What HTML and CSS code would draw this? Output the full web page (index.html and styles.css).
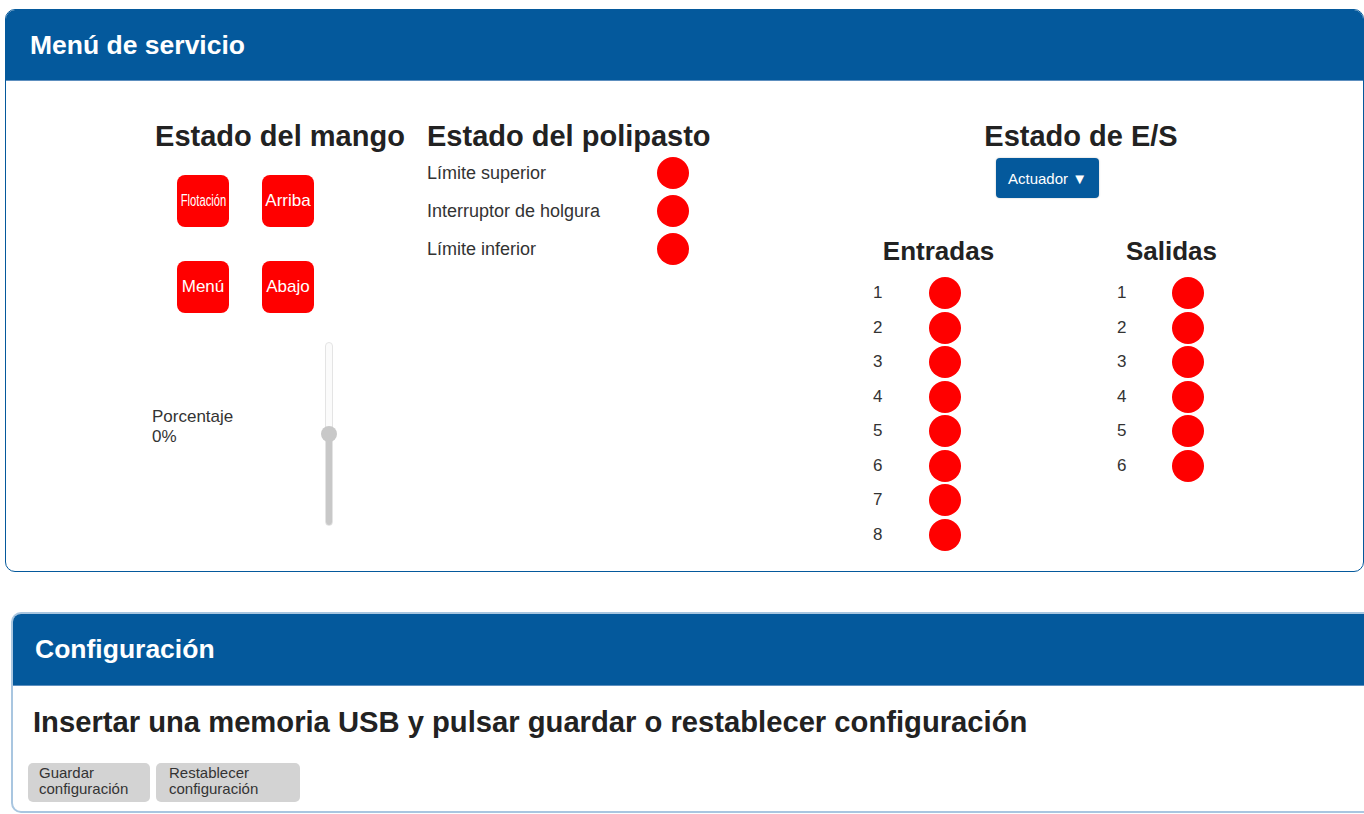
FILE: index.html
```html
<!DOCTYPE html>
<html lang="es">
<head>
  <meta charset="UTF-8">
  <title>Menú de servicio</title>
  <link rel="stylesheet" href="styles.css">
</head>
<body>
<div class="panel panel-service">
  <div class="panel-head"><h2>Menú de servicio</h2></div>
  <div class="service-body">

    <div class="col col-mango">
      <h3 class="col-title center">Estado del mango</h3>
      <div class="pad-grid">
        <button class="pad-btn"><span class="squeeze">Flotación</span></button>
        <button class="pad-btn">Arriba</button>
        <button class="pad-btn">Menú</button>
        <button class="pad-btn">Abajo</button>
      </div>
      <div class="slider-row">
        <div class="slider-label">Porcentaje<br>0%</div>
        <div class="slider"><div class="thumb"></div></div>
      </div>
    </div>

    <div class="col col-hoist">
      <h3 class="col-title">Estado del polipasto</h3>
      <div class="hoist-list">
        <span>Límite superior</span><span class="led"></span>
        <span>Interruptor de holgura</span><span class="led"></span>
        <span>Límite inferior</span><span class="led"></span>
      </div>
    </div>

    <div class="col col-io">
      <h3 class="col-title center">Estado de E/S</h3>
      <button class="drop-btn">Actuador ▼</button>
      <div class="io-grid">
        <div class="io-col">
          <h4 class="io-title">Entradas</h4>
          <div class="io-list io-in">
            <span>1</span><span class="led"></span>
            <span>2</span><span class="led"></span>
            <span>3</span><span class="led"></span>
            <span>4</span><span class="led"></span>
            <span>5</span><span class="led"></span>
            <span>6</span><span class="led"></span>
            <span>7</span><span class="led"></span>
            <span>8</span><span class="led"></span>
          </div>
        </div>
        <div class="io-col">
          <h4 class="io-title">Salidas</h4>
          <div class="io-list io-out">
            <span>1</span><span class="led"></span>
            <span>2</span><span class="led"></span>
            <span>3</span><span class="led"></span>
            <span>4</span><span class="led"></span>
            <span>5</span><span class="led"></span>
            <span>6</span><span class="led"></span>
          </div>
        </div>
      </div>
    </div>

  </div>
</div>

<div class="panel panel-config">
  <div class="panel-head"><h2>Configuración</h2></div>
  <div class="config-body">
    <h3 class="config-title">Insertar una memoria USB y pulsar guardar o restablecer configuración</h3>
    <div class="config-actions">
      <button class="grey-btn btn-save">Guardar<br>configuración</button>
      <button class="grey-btn btn-reset">Restablecer<br>configuración</button>
    </div>
  </div>
</div>
</body>
</html>
```

FILE: styles.css
```css
body {
  margin: 0;
  overflow-x: hidden;
  font-family: "Liberation Sans", Arial, sans-serif;
  color: #333;
  background: #fff;
}
h2, h3, h4 {
  margin: 0;
}
button {
  font-family: inherit;
  border: none;
  padding: 0;
  cursor: pointer;
}

/* panels */
.panel {
  box-sizing: border-box;
  border-radius: 10px;
  overflow: hidden;
  background: #fff;
}
.panel-service {
  width: 1359px;
  height: 563px;
  margin: 9px 0 0 5px;
  border: 1px solid #04599c;
}
.panel-config {
  width: 1372px;
  height: 201px;
  margin: 40px 0 0 11px;
  border: 2px solid #a9c6e0;
}
.panel-head {
  background: #04599c;
  height: 71px;
  border-bottom: 1px solid #5d8fbf;
  box-sizing: border-box;
  padding-left: 24px;
}
.panel-config .panel-head {
  height: 72px;
  padding-left: 22px;
}
.panel-head h2 {
  color: #fff;
  font-size: 26.5px;
  line-height: 70px;
  font-weight: bold;
}

/* service content */
.service-body {
  display: flex;
  padding: 38px 0 0 134px;
}
.col-title {
  font-size: 29px;
  line-height: 34px;
  color: #222;
  white-space: nowrap;
}
.center {
  text-align: center;
}
.col-mango {
  width: 280px;
}
.col-hoist {
  width: 402px;
}
.col-hoist .col-title {
  padding-left: 7px;
}
.col-io {
  width: 518px;
}

.pad-grid {
  display: grid;
  grid-template-columns: 52px 52px;
  column-gap: 33px;
  row-gap: 34px;
  margin: 22px 0 0 37px;
}
.pad-btn {
  width: 52px;
  height: 52px;
  border-radius: 8px;
  background: #ff0000;
  color: #fff;
  font-size: 17px;
  white-space: nowrap;
  overflow: hidden;
}
.squeeze {
  display: inline-block;
  margin: 0 -10px;
  font-size: 16px;
  transform: scaleX(0.7);
}

.slider-row {
  display: flex;
  margin-top: 29px;
}
.slider-label {
  width: 173px;
  margin: 65px 0 0 12px;
  font-size: 17px;
  line-height: 20px;
  color: #333;
}
.slider {
  position: relative;
  width: 8px;
  height: 184px;
  box-sizing: border-box;
  border: 1px solid #e4e4e4;
  border-radius: 4px;
  background: linear-gradient(#fbfbfb 0 50%, #c8c8c8 50%);
}
.thumb {
  position: absolute;
  left: 50%;
  top: 91px;
  width: 16px;
  height: 16px;
  margin: -8px 0 0 -8px;
  border-radius: 50%;
  background: #c8c8c8;
}

.led {
  width: 32px;
  height: 32px;
  border-radius: 50%;
  background: #ff0000;
}

.hoist-list {
  display: grid;
  grid-template-columns: 230px 32px;
  grid-auto-rows: 38px;
  align-items: center;
  padding: 1px 0 0 7px;
  font-size: 18px;
  color: #333;
}

.drop-btn {
  display: block;
  width: 103px;
  height: 40px;
  margin: 5px 0 0 174px;
  border-radius: 4px;
  background: #04599c;
  color: #fff;
  font-size: 15px;
  box-shadow: 0 0 2px rgba(0, 0, 0, 0.25);
}

.io-grid {
  display: grid;
  grid-template-columns: 233px 233px;
  margin-top: 38px;
}
.io-title {
  font-size: 26px;
  line-height: 30px;
  color: #222;
  text-align: center;
}
.io-list {
  display: grid;
  grid-auto-rows: 34.5px;
  align-items: center;
  margin-top: 10px;
  font-size: 17px;
  color: #333;
}
.io-in {
  grid-template-columns: 56px 32px;
  padding-left: 51px;
}
.io-out {
  grid-template-columns: 55px 32px;
  padding-left: 62px;
}

/* config content */
.config-body {
  padding: 19px 0 0 20px;
}
.config-title {
  font-size: 29.2px;
  line-height: 34px;
  color: #222;
  white-space: nowrap;
}
.config-actions {
  display: flex;
  gap: 6px;
  margin: 24px 0 0 -5px;
}
.grey-btn {
  height: 39px;
  box-sizing: border-box;
  padding: 2px 0 5px;
  border-radius: 5px;
  background: #d3d3d3;
  color: #333;
  font-size: 15px;
  line-height: 16px;
  text-align: left;
}
.btn-save {
  width: 122px;
  padding-left: 11px;
}
.btn-reset {
  width: 144px;
  padding-left: 13px;
}
```
